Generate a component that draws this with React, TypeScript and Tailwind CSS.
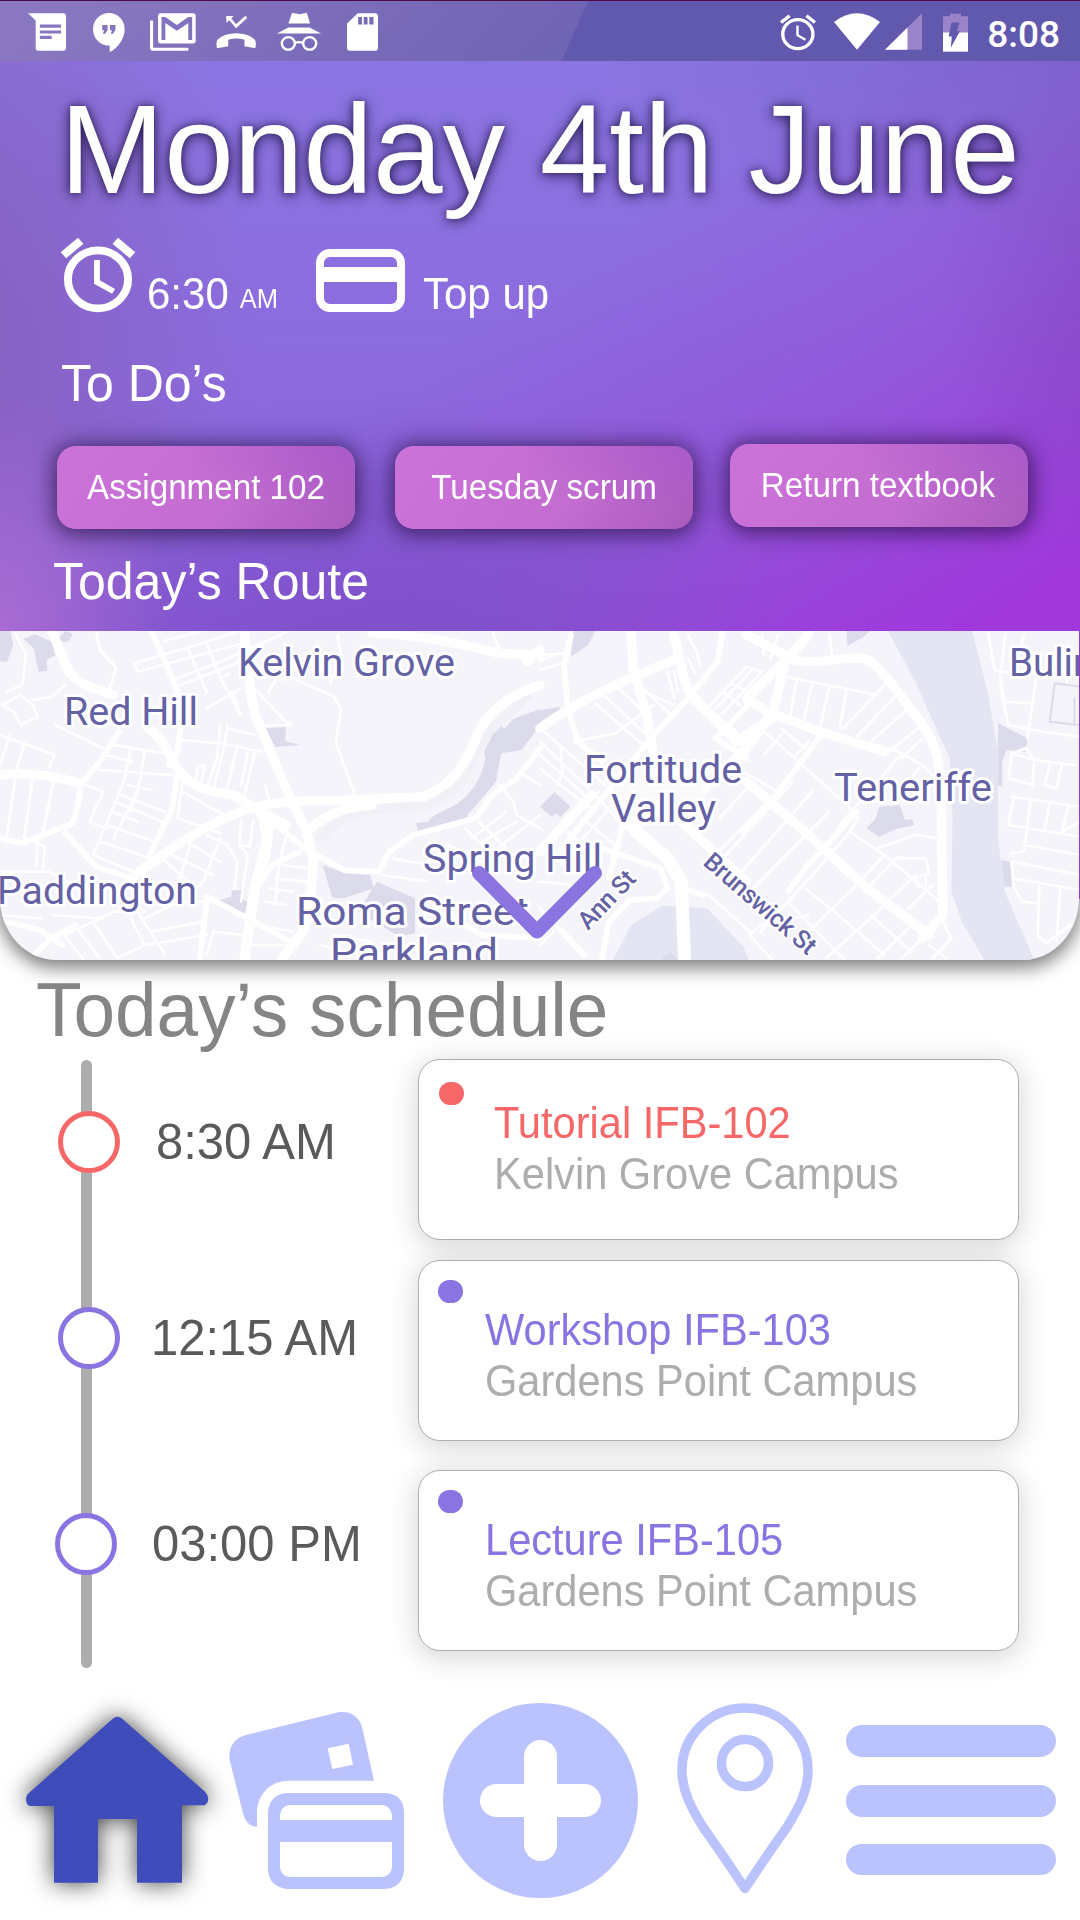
import type { ReactNode } from "react";

type IconProps = { box: string; className: string; children: ReactNode };

function Icon({ box, className, children }: IconProps) {
  return (
    <svg viewBox={box} preserveAspectRatio="none" className={`block shrink-0 overflow-visible ${className}`} fill="white">
      {children}
    </svg>
  );
}

function StatusBar() {
  return (
    <div className="relative flex h-[61px] w-full border-t border-[#4d0a45] bg-[#6059ae]">
      <svg viewBox="0 0 588 60" preserveAspectRatio="none" className="absolute left-0 top-0 h-[60px] w-[588px]">
        <defs>
          <linearGradient id="sheen" x1="0" x2="1" y1="0" y2="0.1">
            <stop offset="0" stopColor="#8c79c2" />
            <stop offset="1" stopColor="#7064b4" />
          </linearGradient>
        </defs>
        <path d="M0 0H588L561.500 60H0z" fill="url(#sheen)" />
      </svg>
      <div className="relative flex w-full items-start pt-3">
        <Icon box="82 40 109 115" className="ml-[28px] h-[38px] w-[38px]">
          <path fillRule="evenodd" d="M82 41H183q8 0 8 8V146q0 8-8 8H111q-7 0-7-8V63zM116 75v10h61v-10zM116 93v9h61v-9zM116 109v10h34v-10z" />
        </Icon>
        <Icon box="270 40 94 116" className="ml-[27px] h-[39px] w-[32px]">
          <path fillRule="evenodd" d="M317 40a47 47 0 0 0-47 48c0 27 21 49 49 49v19c22-11 44-38 44-68c0-27-20-48-46-48zM297 76h16v14l-7 12h-7l4-11h-6zM320 76h16v14l-7 12h-7l4-11h-6z" />
        </Icon>
        <Icon box="437 40 132 115" className="ml-[25px] h-[38px] w-[46px]">
          <path d="M437 63h9v82h101v9H445q-8 0-8-8z" />
          <path fillRule="evenodd" d="M468 41H560q8 0 8 8V124q0 8-8 8H468q-8 0-8-8V49q0-8 8-8zM470 122h11V70L514 94L547 70V122H558V52H547L514 76L481 52H470z" />
        </Icon>
        <Icon box="626 40 118 115" className="ml-[20px] h-[38px] w-[40px]">
          <path d="M656 49h22l-7 7 14 18 28-26 5 7-33 31-20-24-8 8z" />
          <path d="M629 147q-4-20 2-27q20-19 55-19q34 0 54 19q6 7 2 27l-32-6v-20q-24-8-48 0v20z" />
        </Icon>
        <Icon box="805 40 128 115" className="ml-[21px] h-[38px] w-[44px]">
          <path d="M849 39l21 5 22-5 9 33h-63zM805 102l33-18h62l33 18z" />
          <g fill="none" stroke="white" strokeWidth="7">
            <circle cx="838" cy="132" r="19" />
            <circle cx="900" cy="132" r="19" />
            <path d="M857 131q12-6 24 0" />
          </g>
        </Icon>
        <Icon box="1009 40 89 115" className="ml-[26px] h-[38px] w-[31px]">
          <path fillRule="evenodd" d="M1040 41h50q8 0 8 8v97q0 8-8 8h-73q-8 0-8-8V72zM1041 52v23h11V52zM1057 52v23h11V52zM1073 52v23h12V52z" />
        </Icon>

        <Icon box="700 40 105 115" className="ml-auto h-[38px] w-[36px]">
          <g fill="none" stroke="white" strokeWidth="10">
            <circle cx="752" cy="104" r="44" />
            <path d="M703 69L728 48M777 48L802 69" />
            <path d="M751 78v29l23 14" strokeWidth="7" />
          </g>
        </Icon>
        <Icon box="858 40 134 115" className="ml-[18px] h-[38px] w-[46px]">
          <path d="M858 67Q925 15 992 67L925 151z" />
        </Icon>
        <Icon box="1005 40 107 115" className="ml-[5px] h-[38px] w-[37px]">
          <path d="M1005 151L1112 41V151z" fill="#9b83c9" />
          <path d="M1005 151L1070 84V151z" />
        </Icon>
        <Icon box="1174 38 71 116" className="ml-[21px] h-[39px] w-[25px]">
          <path d="M1194 40h31v8h20v50h-71V48h20z" fill="#9b83c9" />
          <path d="M1174 96h71v57h-71z" />
          <path d="M1198 66h23l-8 26h9L1196 141L1199 108H1190z" fill="#6059ae" />
        </Icon>
        <span className="ml-[19px] mr-[20px] mt-[3px] font-['Roboto'] text-[37px] font-medium leading-[37px] text-white">8:08</span>
      </div>
    </div>
  );
}

function Chip({ label, className }: { label: string; className: string }) {
  return (
    <button
      className={`flex h-[83px] w-[298px] items-center justify-center rounded-[19px] bg-[radial-gradient(ellipse_60%_80%_at_100%_0%,rgba(168,88,204,0.8)_0%,transparent_100%),linear-gradient(125deg,#cb72d8_10%,#c36dd0_60%,#aa5abd_100%)] text-[33.2px] leading-none text-white shadow-[0_2px_22px_3px_rgba(25,10,50,0.7)] ${className}`}
    >
      <span className="origin-[50%_84.65%] scale-y-[1.04]">{label}</span>
    </button>
  );
}

function RouteMap() {
  return (
    <div className="relative h-[329px] w-[1079px] overflow-hidden rounded-b-[56px_62px] bg-[#f4f4fa] shadow-[0_6px_18px_2px_rgba(0,0,0,0.5)]">
      <svg viewBox="0 0 1079 329" className="block h-[329px] w-[1079px]" fill="none" strokeLinejoin="round" strokeLinecap="round">
        {/* western half */}
        <g transform="translate(0 -6) scale(0.34439 0.33333)">
          <g fill="#dcdbeb">
            <path d="M0 18H30L38 60L20 112L0 108zM68 42L100 28L150 50L160 90L135 105L138 138L112 140L98 70zM168 40L190 18L212 26L200 48L185 52z" />
            <path d="M770 310L830 306L828 348L872 360L800 366zM640 825L672 815L672 796L700 796L702 822L718 830L710 872L636 836z" />
            <path d="M1568 252L1490 282L1465 312L1445 290L1425 340L1405 380L1410 400C1395 470 1370 500 1330 535C1290 560 1250 572 1245 590L1208 595L1215 622L1350 580L1440 470L1455 385L1515 375L1568 300z" />
            <path d="M937 720L1000 745L1075 750L1085 790L1000 820L965 818zM1095 770L1205 820V925L1160 935L1040 860z" />
          </g>
          <path d="M930 640C980 570 1080 545 1230 545L1330 490L1410 330L1530 215" stroke="#eff1f7" strokeWidth="26" />
          <g stroke="white" strokeWidth="8">
            <path d="M45 25L75 90L65 180L20 200M280 25L290 75L338 128L318 188M5 240L60 210L95 240L110 275L60 300L40 260L5 240M95 225L150 215L190 180" />
            <path d="M0 330L160 390L140 430M160 300L300 370M30 330L0 420M70 360L45 440M45 460L20 630M95 460L70 640M155 470L125 620M235 475L300 500L260 590L310 610" />
            <path d="M330 360L480 385M305 390L385 410M290 435L500 450M380 370L360 470L270 690M420 380L400 500L330 640M370 480L440 495M350 510L480 560M335 530L470 590M325 560L400 590M310 600L450 650M290 650L440 700M270 690L400 745M395 500L380 560" />
            <path d="M475 48L640 5M390 115L570 60L690 20M390 115L400 140L720 50M500 165L640 110L830 22M510 185L700 110M545 70L600 200M600 55L640 160L700 270M640 160L665 145M600 250L700 190M670 200L690 235M720 170L830 290L845 300L770 302M780 200L800 165L850 160L970 215L990 250L975 355L1030 505" />
            <path d="M530 345L640 355L760 380M640 300L630 400L600 490M660 300L650 370L620 490M690 360L660 490M720 380L700 480M570 460L575 425L595 420L585 470M660 310L740 330M530 470L515 580L640 625M530 500L650 570M740 380L710 510M770 480L780 520" />
            <path d="M560 630L520 770M600 630L660 660L690 710L680 790M540 650L640 710M500 690L620 750M640 640L590 770L560 800M470 700L570 790M700 590L695 660L720 690L700 830M735 590L725 665L695 660M830 640L810 720L800 830M820 720L890 730M800 760L890 770M780 790L850 800M770 830L830 840" />
            <path d="M70 640L130 665L125 730M110 640L105 720M0 740L140 740L250 800M0 870L120 880M150 870L300 880M190 935L240 1000M230 920L290 1000M270 890L340 1000M190 930L330 860L420 860M380 830L480 990M420 880L520 830L600 830M440 920L590 890M420 960L600 930M340 1000L420 960L380 880M600 990L620 920L700 930M740 900L850 920M720 960L860 960" />
            <path d="M1140 700L1220 715M1110 750L1240 770M980 30L990 90L960 170M1430 18L1450 75M1350 610L1430 690M1370 640L1470 560M1390 590L1480 680M1400 650L1500 590M1420 690L1568 570M1450 480L1490 530L1500 570L1568 610M1520 450L1568 480M1300 660L1400 710M970 930L1080 950M930 960L1100 1000" />
          </g>
          <g stroke="white" strokeWidth="17">
            <path d="M345 320C310 380 270 440 235 475C230 520 225 560 210 595L65 655L0 640M440 18L480 110L515 200L525 300L515 380L490 420M515 450L500 550L430 700M190 625L280 725L380 760M0 885L115 915L180 960M220 900L150 940L90 1000M600 830L580 1000" />
            <path d="M1568 370L1500 460L1430 510L1380 580L1200 630L1130 680L1100 740L1000 735L900 680L800 600L760 570M600 815L720 880L860 960M760 600L770 640L730 800L710 1000M870 680L790 720L745 790M1220 900L1300 870L1400 930L1568 940" />
          </g>
          <g stroke="white" strokeWidth="28">
            <path d="M150 18L200 140C240 190 280 190 330 210M0 450C90 440 160 455 230 475M430 310C480 340 490 400 530 450C580 500 620 500 680 510L740 550L830 600M380 760C470 690 570 610 700 560C800 520 900 530 1010 525L1230 515C1310 480 1350 430 1390 320C1430 240 1510 200 1568 180M900 610C960 560 1010 545 1080 540" />
            <path d="M710 18C720 100 720 200 745 280L830 490L890 620L910 700L900 850L880 920L820 1000M1080 25C1230 30 1350 60 1450 85L1568 90M1568 75L1530 110" />
          </g>
          <path d="M760 570L780 610L770 690L740 790L710 1000" stroke="white" strokeWidth="30" />
        </g>

        {/* eastern half */}
        <g transform="translate(540 -6) scale(0.34439 0.33333)">
          <path d="M1010 18H1255L1300 200L1330 380L1330 640L1350 800L1435 1005H1290L1225 890L1195 800L1198 570L1190 400L1090 170z" fill="#e4e5f2" />
          <path d="M212 1005L265 900L355 842L485 850L590 965L606 1005z" fill="#e4e5f2" />
          <g fill="#dcdbeb">
            <path d="M98 18H160L140 60L90 95zM0 255L60 245L45 275L0 298zM890 18H958L940 35L893 62z" />
            <path d="M985 545L1045 540L1060 585L1080 583L1088 600L1035 612L985 635L948 610L975 580zM1330 295L1416 340L1410 380L1355 375L1342 410V485L1330 480zM1340 705L1365 710L1372 785L1348 785zM360 990L380 982L400 1005H355z" />
          </g>
          <path d="M1495 175L1568 185M1495 175L1480 290L1568 300M1552 220V300" stroke="#dcdbeb" strokeWidth="6" />
          <g stroke="white" strokeWidth="8">
            <path d="M0 90L70 85M0 135L80 110M0 110L50 85M100 350L220 325L330 240M160 235L300 360M190 215L310 330M230 190L310 270M270 160L380 270M300 200L390 240M370 140L390 220M390 140L400 200M430 30L455 80L465 120M430 100L450 145" />
            <path d="M490 245L600 125L645 140L530 265M510 250L620 130M560 180L620 205M530 200L580 240M645 30L650 90M670 100L690 30M840 30L850 100M710 155L980 210M745 165L725 280M790 175L765 290M840 185L815 300M890 195L870 310M1000 180L880 310M1035 210L920 335M1070 250L960 350M1110 300L1000 390" />
            <path d="M650 320L740 400L880 530L925 575L900 620L1000 690L1160 830M770 370L700 310M740 395L780 350M590 440L690 500M690 500L480 720M735 470L500 735M790 500L560 770M840 560L600 810M700 330L650 390M620 470L520 580M975 360L1040 380L1110 420L1150 460M1050 385L980 470L870 600M1110 340L1050 400M1100 430L1030 520" />
            <path d="M900 620L800 740L640 920M980 670L1090 630L1160 640M1000 690L920 780L770 930M1040 695L950 790M1090 750L960 880L830 1000M1140 780L1070 850M960 870L1080 980M770 790L900 900L1000 990M610 930L640 900L780 870M610 930L670 1000M1030 700L1120 700L1130 745L1090 760L1100 785M1120 750V790M1170 890L1195 940L1140 1000M1080 900L980 1000M1120 930L1050 1000M1130 960L1180 1000M440 800L490 810L610 920M720 830L880 1000" />
            <path d="M1300 18L1320 135L1370 145M1350 30L1340 130M1405 30L1390 90M1530 100V170M1335 150L1350 230L1425 235M1335 180L1360 300L1460 320L1568 335M1440 165L1415 340M1370 390L1360 460L1430 480L1435 405L1370 385L1410 370L1435 405L1550 420M1480 420L1465 480L1500 490L1515 420M1370 515L1568 545M1375 520L1360 600L1568 635M1425 525L1415 605M1480 535L1465 615M1535 545L1515 620L1568 590M1415 605L1405 680L1370 685M1410 660L1568 690M1370 710L1568 750M1370 710L1375 785L1400 830L1440 835M1375 760L1568 795M1450 785L1445 930L1470 955L1540 900M1510 795L1500 950" />
            <path d="M0 310L190 480M0 350L150 500L250 610M0 390L130 510M0 430L60 480L160 560M60 370L65 440L50 480M170 500L0 680M200 550L60 720M120 580L230 670M80 620L180 710M0 770L90 780M0 850L120 990M40 920L0 960" />
          </g>
          <g stroke="white" strokeWidth="17">
            <path d="M530 20L515 110L430 220L330 330L260 420L180 520L50 690M90 30L70 120L80 250L110 350L180 410M820 325L700 490L590 620M610 235L510 340L600 400M920 560L770 730L720 800M240 600L200 760M180 670L350 730L370 790L340 820L260 825L200 890L180 1000M60 915L130 990M420 790L470 810" />
          </g>
          <g stroke="white" strokeWidth="28">
            <path d="M0 310C90 240 230 170 390 105M265 20L270 130L310 270L330 400M390 30L415 150L440 220L600 360M600 30L740 105C820 120 860 95 940 100C980 110 1020 180 1090 270C1150 340 1170 430 1165 550L1170 870L1110 940M780 30L690 130L600 220L670 265L830 325L1000 380M710 120L675 265L600 370L480 490M450 220L570 350L680 275M150 510L60 610L0 680M600 470L780 630L950 790L1130 930M400 580L600 770" />
          </g>
          <path d="M220 530L280 620L370 700L410 770L420 1005" stroke="white" strokeWidth="38" />
          <path d="M180 440L500 420L470 590L240 610z" fill="white" opacity="0.550" />
          <path d="M0 545L42 500L88 545L60 577L45 565L35 577z" fill="#dcdbeb" />
        </g>

        <g fill="#6462a4" stroke="white" strokeWidth="6" paintOrder="stroke" fontFamily="Roboto, sans-serif" fontSize="38.500">
          <text x="238" y="44.500" textLength="217" lengthAdjust="spacingAndGlyphs">Kelvin Grove</text>
          <text x="64" y="93.500" textLength="134" lengthAdjust="spacingAndGlyphs">Red Hill</text>
          <text x="-3" y="273" textLength="200" lengthAdjust="spacingAndGlyphs">Paddington</text>
          <text x="423" y="240.500" textLength="179" lengthAdjust="spacingAndGlyphs">Spring Hill</text>
          <text x="296" y="293.500" textLength="233" lengthAdjust="spacingAndGlyphs" fontSize="39.500">Roma Street</text>
          <text x="330" y="334.500" textLength="168" lengthAdjust="spacingAndGlyphs" fontSize="39.500">Parkland</text>
          <text x="584" y="152" textLength="158" lengthAdjust="spacingAndGlyphs">Fortitude</text>
          <text x="611" y="191" textLength="105" lengthAdjust="spacingAndGlyphs">Valley</text>
          <text x="834" y="170" textLength="158" lengthAdjust="spacingAndGlyphs">Teneriffe</text>
          <text x="1009" y="44.500">Bulimba</text>
          <g fontSize="25" fontWeight="500" strokeWidth="4">
            <text transform="translate(588 300) rotate(-46)" textLength="71">Ann St</text>
            <text transform="translate(702 233) rotate(41)" textLength="140">Brunswick St</text>
          </g>
        </g>
        <path d="M479 242L537 300.500L595 242" stroke="#8b73e0" strokeWidth="14" />
      </svg>
    </div>
  );
}

function Header() {
  return (
    <section>
      <StatusBar />
      <div className="relative z-10 h-[570px] bg-[radial-gradient(ellipse_16%_42%_at_0%_100%,rgba(178,112,214,0.8)_0%,transparent_100%),radial-gradient(ellipse_38%_50%_at_36%_108%,rgba(118,80,194,0.75)_0%,transparent_100%),radial-gradient(ellipse_20%_50%_at_107%_42%,rgba(120,68,180,0.55)_0%,transparent_100%),radial-gradient(ellipse_45%_42%_at_100%_-8%,rgba(118,94,196,0.75)_0%,transparent_100%),radial-gradient(ellipse_32%_90%_at_-8%_50%,rgba(132,92,180,0.85)_0%,transparent_100%),linear-gradient(146deg,transparent_45%,rgba(150,76,216,0.6)_70%,#a038dc_94%),linear-gradient(180deg,#8b75e2_0%,#8c6ade_60%,#8859d8_100%)] text-white">
        <h1 className="ml-[60px] origin-[0_90%] scale-y-[1.015] whitespace-nowrap pt-[24px] text-[125.1px] leading-[130px] [text-shadow:0_2px_14px_rgba(20,10,50,0.8),0_0_6px_rgba(20,10,50,0.4)]">Monday 4th June</h1>
        <div className="mt-[23px] flex h-[75px] items-start pl-[61px]">
          <Icon box="178 714 214 222" className="h-[74px] w-[74px]">
            <g fill="none" stroke="white">
              <circle cx="285" cy="838" r="87" strokeWidth="23" />
              <path d="M185 766L235 722M335 722L385 766" strokeWidth="24" />
              <path d="M282 780v66l48 28" strokeWidth="17" />
            </g>
          </Icon>
          <span className="ml-[12px] mt-[35px] origin-[0_84.65%] scale-y-[1.05] text-[42px] leading-[43px]">6:30</span>
          <span className="ml-[11px] mt-[48px] origin-[0_84.65%] scale-y-[1.05] text-[25.5px] leading-[26px]">AM</span>
          <Icon box="0 0 89 63" className="ml-[38px] mt-[11px] h-[63px] w-[89px]">
            <rect x="4" y="4" width="81" height="55" rx="10" fill="none" stroke="white" strokeWidth="8" />
            <path d="M4 18H85V33H4z" />
          </Icon>
          <span className="ml-[18px] mt-[35px] origin-[0_84.65%] scale-y-[1.05] text-[42px] leading-[43px]">Top up</span>
        </div>
        <h2 className="ml-[61px] mt-[46px] origin-[0_84.65%] scale-y-[1.04] text-[50px] leading-none">To Do’s</h2>
        <div className="mt-[35px] flex h-[85px] items-start pl-[57px]">
          <Chip label="Assignment 102" className="mt-[2px]" />
          <Chip label="Tuesday scrum" className="ml-[40px] mt-[2px]" />
          <Chip label="Return textbook" className="ml-[37px] pr-0.5" />
        </div>
        <h2 className="ml-[53px] mt-[28px] origin-[0_84.65%] scale-y-[1.04] text-[50px] leading-none">Today’s Route</h2>
      </div>
      <div className="flex">
        <RouteMap />
        <div className="relative h-[268px] w-px bg-[#9a38d0]" />
      </div>
    </section>
  );
}

type Lesson = {
  time: string;
  title: string;
  place: string;
  row: string;
  ring: string;
  timeAt: string;
  dot: string;
  text: string;
  tone: string;
};

const lessons: Lesson[] = [
  {
    time: "8:30 AM",
    title: "Tutorial IFB-102",
    place: "Kelvin Grove Campus",
    row: "",
    ring: "ml-[58px] mt-[52px] border-[#f66868]",
    timeAt: "ml-[36px] mt-[59px]",
    dot: "ml-[20px] mt-[22px] bg-[#f66868]",
    text: "ml-[30px] mt-[39px]",
    tone: "text-[#f66868]",
  },
  {
    time: "12:15 AM",
    title: "Workshop IFB-103",
    place: "Gardens Point Campus",
    row: "mt-[20px]",
    ring: "ml-[58px] mt-[47px] border-[#8a74e1]",
    timeAt: "ml-[31px] mt-[54px]",
    dot: "ml-[19px] mt-[19px] bg-[#8a74e1]",
    text: "ml-[22px] mt-[45px]",
    tone: "text-[#8a74e1]",
  },
  {
    time: "03:00 PM",
    title: "Lecture IFB-105",
    place: "Gardens Point Campus",
    row: "mt-[29px]",
    ring: "ml-[55px] mt-[43px] border-[#8a74e1]",
    timeAt: "ml-[35px] mt-[50px]",
    dot: "ml-[19px] mt-[19px] bg-[#8a74e1]",
    text: "ml-[22px] mt-[45px]",
    tone: "text-[#8a74e1]",
  },
];

function Schedule() {
  return (
    <section>
      <h2 className="ml-[36px] mt-[12px] origin-[0_84.65%] scale-y-[1.02] text-[74.8px] leading-[76px] text-[#858585]">Today’s schedule</h2>
      <div className="relative mt-[11px]">
        <div className="absolute left-[81px] top-px h-[608px] w-[11px] rounded-full bg-[#adadad]" />
        {lessons.map((l) => (
          <div key={l.time} className={`relative flex h-[181px] items-start ${l.row}`}>
            <div className={`size-[62px] shrink-0 rounded-full border-[5.5px] bg-white ${l.ring}`} />
            <span className={`origin-[0_84.65%] scale-y-[1.03] whitespace-nowrap text-[49px] leading-none text-[#5a5a5a] ${l.timeAt}`}>{l.time}</span>
            <div className="ml-auto mr-[61px] flex h-[181px] w-[601px] items-start rounded-[22px] border border-[#aeaeae] bg-white shadow-[0_5px_28px_2px_rgba(0,0,0,0.16)]">
              <span className={`h-[23px] w-[25px] shrink-0 rounded-full ${l.dot}`} />
              <div className={`whitespace-nowrap text-[41.6px] leading-[50.5px] ${l.text}`}>
                <p className={`origin-[0_78%] scale-y-[1.05] ${l.tone}`}>{l.title}</p>
                <p className="origin-[0_78%] scale-y-[1.05] text-[#adadad]">{l.place}</p>
              </div>
            </div>
          </div>
        ))}
      </div>
    </section>
  );
}

function BottomNav() {
  return (
    <nav className="mt-[52px] flex items-start pl-[26px]">
      <Icon box="78 111 546 498" className="mt-[14px] h-[166px] w-[182px] drop-shadow-[0_0_12px_rgba(0,0,0,0.75)]">
        <path fill="#3e4db9" d="M340 115Q352 106 365 115L615 335Q630 350 622 368L614 376H546V608H411V417H294V608H162V378H92Q78 378 78 355Q80 343 90 336z" />
      </Icon>
      <Icon box="687 96 525 531" className="ml-[21px] mt-[9px] h-[177px] w-[175px]">
        <path fill="#bbc3ff" fillRule="evenodd" d="M730 167L1015 97C1050 93 1078 108 1087 145L1122 302H865C810 302 771 345 771 400V440C750 440 735 425 729 400L689 240C684 205 700 178 730 167zM983 205L1046 191L1059 254L997 267z" />
        <path fill="#bbc3ff" fillRule="evenodd" d="M861 339H1155Q1212 343 1212 397V570Q1208 623 1155 627H861Q808 621 804 570V397Q808 343 861 339zM840 420H1176V405Q1172 379 1148 375H868Q843 379 840 405zM840 486V563Q843 587 868 591H1148Q1172 587 1176 563V486z" />
      </Icon>
      <Icon box="0 0 195 195" className="ml-[39px] size-[195px]">
        <circle cx="97.500" cy="97.500" r="97.500" fill="#bbc3ff" />
        <path d="M53.500 97.500H141.500M97.500 53.500V141.500" stroke="white" strokeWidth="33" strokeLinecap="round" />
      </Icon>
      <Icon box="0 0 136 191" className="ml-[39px] h-[191px] w-[136px]">
        <g fill="none" stroke="#bbc3ff" strokeWidth="9.500" strokeLinejoin="round">
          <path d="M68 5C33 5 5 33 5 67C5 89 15 106 26 124Q48 155 68 185.500Q88 155 110 124C121 106 131 89 131 67C131 33 103 5 68 5z" />
          <circle cx="68" cy="60" r="23.500" />
        </g>
      </Icon>
      <div className="ml-[33px] mt-[22px] flex flex-col gap-[27.500px]">
        <div className="h-8 w-[210px] rounded-full bg-[#bbc3ff]" />
        <div className="h-8 w-[210px] rounded-full bg-[#bbc3ff]" />
        <div className="h-[31px] w-[210px] rounded-full bg-[#bbc3ff]" />
      </div>
    </nav>
  );
}

export default function App() {
  return (
    <main className="h-[1920px] w-[1080px] overflow-hidden bg-white font-['Liberation_Sans',Arial,sans-serif]">
      <Header />
      <Schedule />
      <BottomNav />
    </main>
  );
}
